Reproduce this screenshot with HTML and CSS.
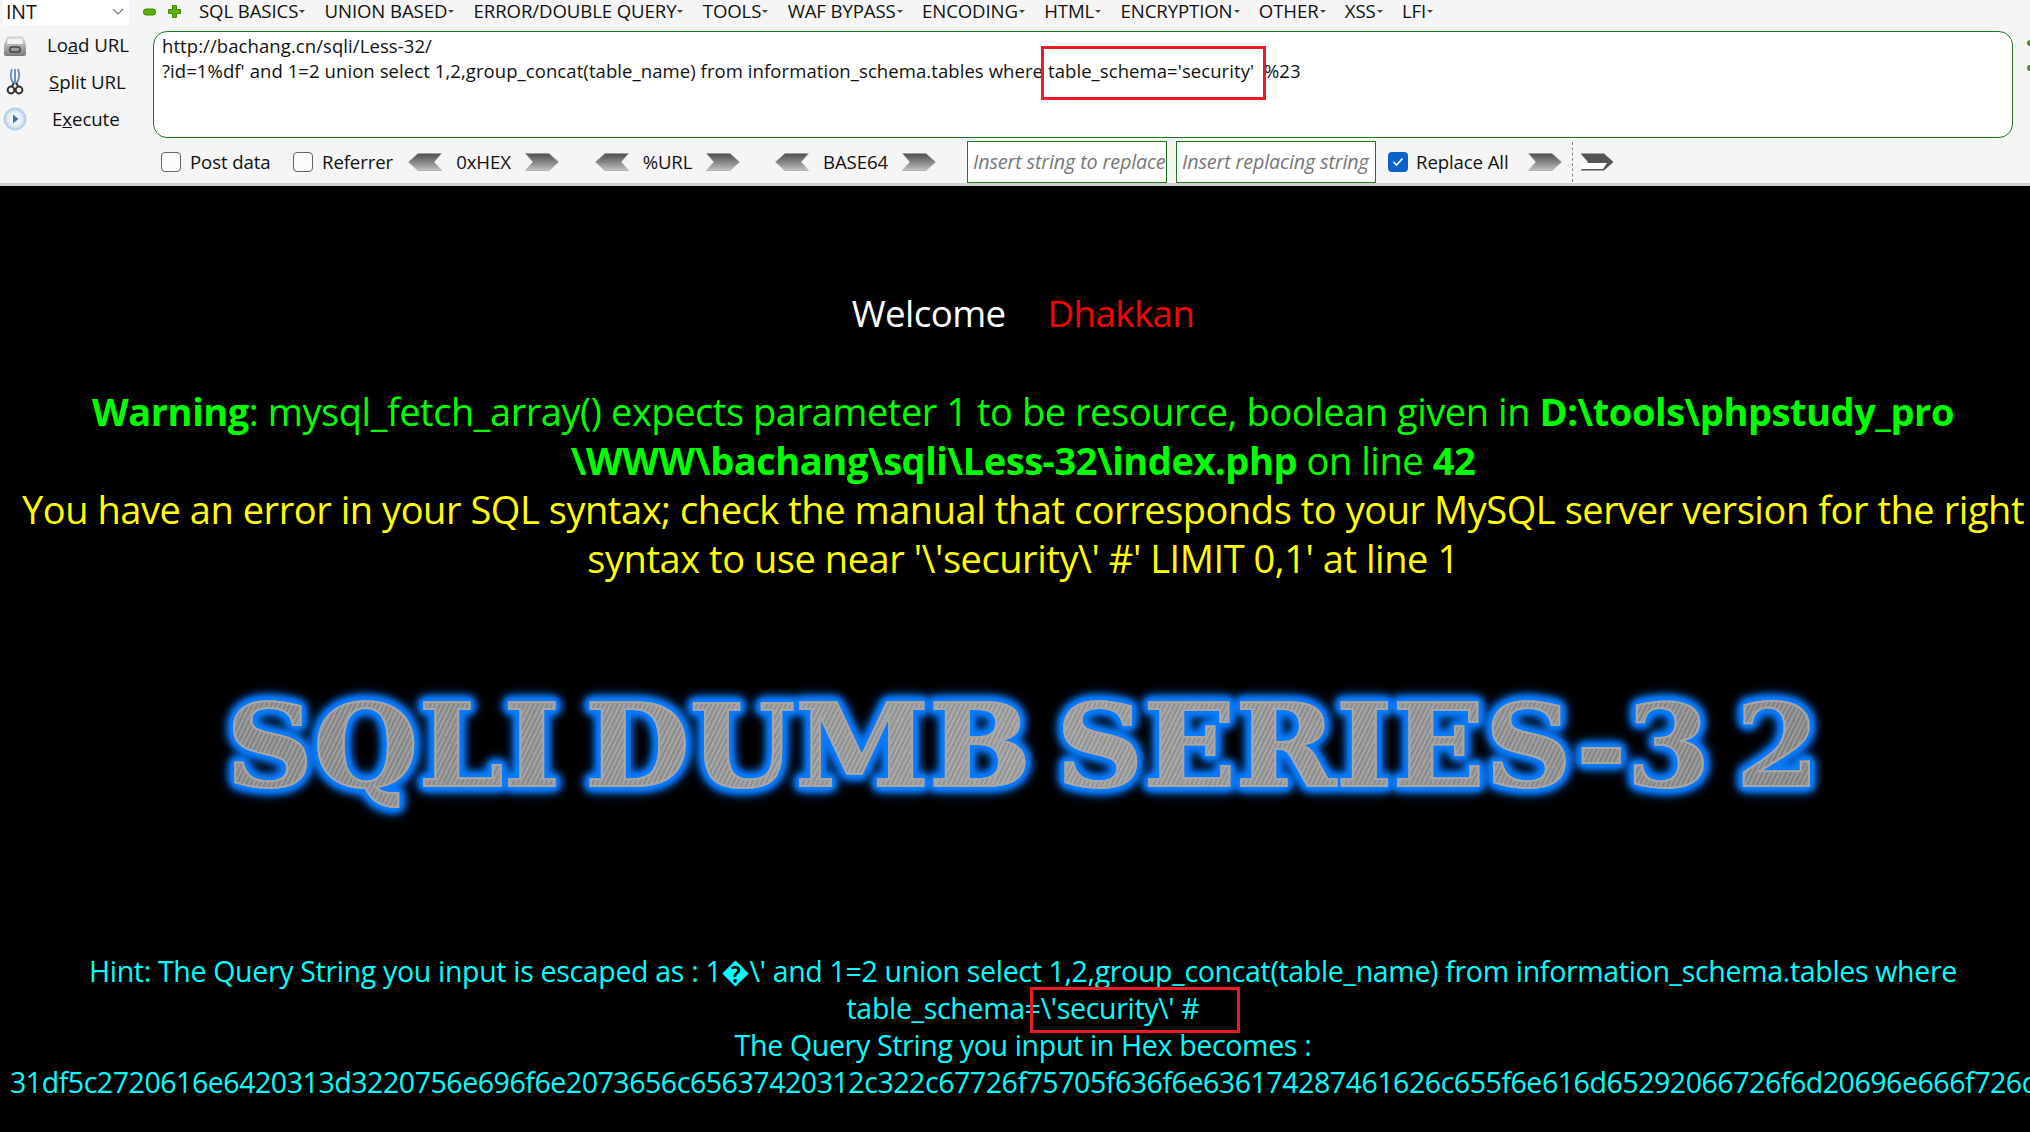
FILE: index.html
```html
<!DOCTYPE html>
<html>
<head>
    <title>Less-32</title>
    <meta http-equiv="Content-Type" content="text/html; charset=utf-8"/>
    <link rel="stylesheet" href="styles.css">
</head>
<body>
<svg class="defs" width="0" height="0">
    <defs>
        <linearGradient id="arrowFill" x1="0" y1="0" x2="0" y2="1">
            <stop offset="0" stop-color="#4f4f4f"/>
            <stop offset="0.55" stop-color="#8a8a8a"/>
            <stop offset="1" stop-color="#c4c4c4"/>
        </linearGradient>
        <linearGradient id="driveFill" x1="0" y1="0" x2="0" y2="1">
            <stop offset="0" stop-color="#e2e2e2"/>
            <stop offset="1" stop-color="#7b7b7b"/>
        </linearGradient>
        <radialGradient id="playFill">
            <stop offset="0" stop-color="#ffffff"/>
            <stop offset="0.7" stop-color="#dfeaf7"/>
            <stop offset="1" stop-color="#a9c6e6"/>
        </radialGradient>
        <symbol id="arrowRight" viewBox="0 0 34 18">
            <path d="M0.5 0.5H24L33.5 9L24 17.5H0.5L8 9Z" fill="url(#arrowFill)" stroke="#9a9a9a" stroke-width="0.6"/>
        </symbol>
        <symbol id="arrowLeft" viewBox="0 0 34 18">
            <path d="M33.5 0.5H10L0.5 9L10 17.5H33.5L26 9Z" fill="url(#arrowFill)" stroke="#9a9a9a" stroke-width="0.6"/>
        </symbol>
    </defs>
</svg>

<div id="hackbar">
    <div class="menu-row">
        <div class="select-box">
            <span>INT</span>
            <svg class="select-chevron" width="12" height="7" viewBox="0 0 12 7"><path d="M1 1L6 6L11 1" fill="none" stroke="#777" stroke-width="1.2"/></svg>
        </div>
        <svg class="pm-icon" width="13" height="8" viewBox="0 0 13 8"><rect x="0.5" y="1" width="12" height="6" rx="2.5" fill="#5fae0a" stroke="#3f8a06"/></svg>
        <svg class="pm-icon plus" width="13" height="13" viewBox="0 0 13 13"><path d="M4.5 0.5h4v4h4v4h-4v4h-4v-4h-4v-4h4z" fill="#5fae0a" stroke="#3f8a06" stroke-linejoin="round"/></svg>
        <ul class="menu">
            <li>SQL BASICS</li>
            <li>UNION BASED</li>
            <li>ERROR/DOUBLE QUERY</li>
            <li>TOOLS</li>
            <li>WAF BYPASS</li>
            <li>ENCODING</li>
            <li>HTML</li>
            <li>ENCRYPTION</li>
            <li>OTHER</li>
            <li>XSS</li>
            <li>LFI</li>
        </ul>
    </div>

    <div class="url-row">
        <div class="side-buttons">
            <div class="side-button">
                <svg width="24" height="24" viewBox="0 0 24 24">
                    <path d="M4 3H20L23 12V21a2 2 0 0 1-2 2H3a2 2 0 0 1-2-2V12Z" fill="url(#driveFill)"/>
                    <path d="M5 6H19L20 11H4Z" fill="#f4f4f4"/>
                    <rect x="7" y="14" width="10" height="5" rx="2" fill="none" stroke="#444" stroke-width="1.6"/>
                </svg>
                <span class="side-label load">Lo<u>a</u>d URL</span>
            </div>
            <div class="side-button">
                <svg width="24" height="28" viewBox="0 0 24 28">
                    <path d="M9 1C7 6 8 12 11 16M15 1C17 6 16 12 13 16M12 1V15" fill="none" stroke="#6f93b8" stroke-width="2"/>
                    <circle cx="8" cy="22" r="3.4" fill="none" stroke="#333" stroke-width="2"/>
                    <circle cx="16" cy="22" r="3.4" fill="none" stroke="#333" stroke-width="2"/>
                    <path d="M9 18L11 15M15 18L13 15" stroke="#333" stroke-width="2"/>
                </svg>
                <span class="side-label split"><u>S</u>plit URL</span>
            </div>
            <div class="side-button">
                <svg width="24" height="24" viewBox="0 0 24 24">
                    <circle cx="12" cy="12" r="11" fill="url(#playFill)" stroke="#b5cde8"/>
                    <path d="M10 7.5L15.5 12L10 16.5Z" fill="#3f72ad"/>
                </svg>
                <span class="side-label execute">E<u>x</u>ecute</span>
            </div>
        </div>
        <div class="url-box">http://bachang.cn/sqli/Less-32/<br>?id=1%df' and 1=2 union select 1,2,group_concat(table_name) from information_schema.tables where table_schema='security'&nbsp; %23</div>
        <div class="url-dots"><i></i><i></i></div>
    </div>

    <div class="tool-row">
        <label class="check"><span class="box"></span>Post data</label>
        <label class="check referrer"><span class="box"></span>Referrer</label>
        <div class="codec hex">
            <svg width="34" height="18"><use href="#arrowLeft"/></svg><span>0xHEX</span><svg width="34" height="18"><use href="#arrowRight"/></svg>
        </div>
        <div class="codec url">
            <svg width="34" height="18"><use href="#arrowLeft"/></svg><span>%URL</span><svg width="34" height="18"><use href="#arrowRight"/></svg>
        </div>
        <div class="codec b64">
            <svg width="34" height="18"><use href="#arrowLeft"/></svg><span>BASE64</span><svg width="34" height="18"><use href="#arrowRight"/></svg>
        </div>
        <input class="replace-input first" placeholder="Insert string to replace">
        <input class="replace-input" placeholder="Insert replacing string">
        <label class="check replace-all"><span class="box checked"><svg width="12" height="10" viewBox="0 0 12 10"><path d="M1.5 5L4.5 8L10.5 1.5" fill="none" stroke="#fff" stroke-width="1.6"/></svg></span>Replace All</label>
        <svg class="run-arrow" width="34" height="18"><use href="#arrowRight"/></svg>
        <span class="tool-sep"></span>
        <svg class="run-white" width="34" height="18" viewBox="0 0 34 18">
            <path d="M0.5 0.5H24L33.5 9L24 17.5H0.5L8 9Z" fill="#555"/>
            <path d="M5 10H27L23 16H1Z" fill="#fff"/>
        </svg>
    </div>
</div>

<div id="page">
    <div class="welcome">Welcome<span class="dhakkan">Dhakkan</span></div>

    <div class="errors">
        <div class="warning"><b>Warning</b>: mysql_fetch_array() expects parameter 1 to be resource, boolean given in <b>D:\tools\phpstudy_pro<br>\WWW\bachang\sqli\Less-32\index.php</b> on line <b>42</b></div>
        <div class="sql-error">You have an error in your SQL syntax; check the manual that corresponds to your MySQL server version for the right<br>syntax to use near '\'security\' #' LIMIT 0,1' at line 1</div>
    </div>

    <div class="title-wrap"><div class="title">SQLI DUMB SERIES-3 2</div></div>

    <div class="hint">
        Hint: The Query String you input is escaped as : 1�\' and 1=2 union select 1,2,group_concat(table_name) from information_schema.tables where<br>
        table_schema=\'security\' #<br>
        The Query String you input in Hex becomes :
        <div class="hex-line">31df5c2720616e6420313d3220756e696f6e2073656c65637420312c322c67726f75705f636f6e636174287461626c655f6e616d65292066726f6d20696e666f726d6174696f6e5f736368656d612e7461626c6573207768657265</div>
    </div>
</div>

<!-- red boxes drawn on top of the screenshot -->
<div class="mark mark-url"></div>
<div class="mark mark-hint"></div>
</body>
</html>
```

FILE: styles.css
```css
html, body {
    margin: 0;
    padding: 0;
    background-color: #000;
    overflow: hidden;
}

body {
    width: 2030px;
    height: 1132px;
    position: relative;
    font-family: "Open Sans", "DejaVu Sans", sans-serif;
}

.defs {
    display: block;
    position: absolute;
}

#hackbar {
    height: 183px;
    background-color: #f5f5f5;
    border-bottom: 3px solid #cfcfcf;
    color: #111;
    font-size: 18.6px;
    letter-spacing: -0.1px;
}

.menu-row {
    height: 31px;
    display: flex;
    align-items: flex-start;
}

.select-box {
    width: 120px;
    height: 23px;
    padding: 0 3px 2px;
    margin-left: 3px;
    background-color: #fff;
    display: flex;
    align-items: center;
    justify-content: space-between;
    font-size: 19.5px;
    line-height: 22px;
}

.select-chevron {
    margin-right: 2px;
}

.pm-icon {
    margin: 8px 0 0 14px;
}

.pm-icon.plus {
    margin: 5px 0 0 12px;
}

.menu {
    display: flex;
    list-style: none;
    margin: 0 0 0 18px;
    padding: 0;
    line-height: 22px;
}

.menu li {
    display: flex;
    align-items: center;
    margin-right: 19.3px;
}

.menu li::after {
    content: "";
    margin-left: 1px;
    border-top: 3px solid #444;
    border-left: 3px solid transparent;
    border-right: 3px solid transparent;
}

.url-row {
    height: 107px;
    display: flex;
    align-items: stretch;
}

.side-buttons {
    width: 153px;
    margin-top: -5px;
    flex-shrink: 0;
    display: flex;
    flex-direction: column;
}

.side-button {
    height: 37px;
    display: flex;
    align-items: center;
    padding-left: 3px;
}

.side-label {
    font-size: 18.7px;
    white-space: nowrap;
    margin-left: 20px;
}

.side-label.split {
    margin-left: 22px;
}

.side-label.execute {
    margin-left: 25px;
}

.url-box {
    width: 1860px;
    height: 107px;
    box-sizing: border-box;
    background-color: #fff;
    border: 1px solid #1d7a1d;
    border-radius: 14px;
    padding: 2px 8px;
    font-size: 18.5px;
    letter-spacing: 0.08px;
    line-height: 24.5px;
    white-space: nowrap;
}

.url-dots {
    width: 17px;
    padding: 9px 0 0 14px;
    box-sizing: border-box;
    overflow: hidden;
}

.url-dots i {
    display: block;
    width: 6px;
    height: 6px;
    margin-bottom: 19px;
    border-radius: 50%;
    background-color: #4d9a12;
}

.tool-row {
    height: 45px;
    padding-top: 1px;
    padding-left: 161px;
    display: flex;
    align-items: center;
}

.check {
    display: flex;
    align-items: center;
    white-space: nowrap;
}

.box {
    width: 18px;
    height: 18px;
    margin-right: 9px;
    border: 1px solid #666;
    border-radius: 4px;
    background-color: #fbfbfb;
    flex-shrink: 0;
}

.box.checked {
    width: 20px;
    height: 20px;
    margin-right: 8px;
    border: 0;
    background-color: #0a63c9;
    display: flex;
    align-items: center;
    justify-content: center;
}

.check.referrer {
    width: 115px;
}

.check:first-child {
    width: 132px;
}

.codec {
    display: flex;
    align-items: center;
    justify-content: space-between;
    width: 151px;
}

.codec.hex {
    margin-right: 36px;
}

.codec.url {
    width: 145px;
    margin-right: 35px;
}

.codec.b64 {
    width: 161px;
    margin-right: 31px;
}

.replace-input {
    width: 200px;
    height: 42px;
    box-sizing: border-box;
    margin: 0 9px 0 0;
    padding: 0 0 0 5px;
    border: 1px solid #1d7a1d;
    background-color: #fff;
    font-family: inherit;
    font-size: 19.8px;
    font-style: italic;
    letter-spacing: -0.15px;
}

.replace-input::placeholder {
    color: #777;
    opacity: 1;
}

.replace-all {
    margin-left: 3px;
    width: 140px;
}

.tool-sep {
    height: 40px;
    margin: 0 7px 0 10px;
    border-left: 1px dashed #888;
}

/* page text is centred on a box a bit wider than the window */
#page {
    width: 2046px;
    color: #fff;
    text-align: center;
    white-space: nowrap;
}

.welcome {
    padding-top: 102px;
    font-size: 36.7px;
    line-height: 50px;
    letter-spacing: -0.6px;
}

.dhakkan {
    margin-left: 42px;
    color: #f00;
}

.errors {
    margin-top: 49px;
    font-size: 38px;
    line-height: 49px;
    letter-spacing: -0.45px;
}

.warning {
    color: #0f0;
}

.sql-error {
    color: #ff0;
}

.title-wrap {
    margin-top: 98px;
    height: 130px;
}

.title {
    display: inline-block;
    padding: 10px 20px;
    font-family: "DejaVu Serif", serif;
    font-weight: bold;
    font-size: 114px;
    line-height: 110px;
    word-spacing: -16px;
    color: transparent;
    -webkit-text-stroke: 2px #a6a6a6;
    transform: scaleX(1.06);
    background-image:
        repeating-linear-gradient(115deg, rgba(255, 255, 255, 0.1) 0, rgba(255, 255, 255, 0.1) 2px, rgba(0, 0, 0, 0.08) 2px, rgba(0, 0, 0, 0.08) 4px),
        linear-gradient(90deg, #8f8f8f, #a3a3a3 50%, #8c8c8c);
    -webkit-background-clip: text;
    background-clip: text;
    filter: drop-shadow(0 0 2px #0a7cff) drop-shadow(0 0 2px #0a7cff) drop-shadow(0 0 3px #0a7cff) drop-shadow(0 0 3px #0a7cff) drop-shadow(0 0 4px #0a70e8);
}

.hint {
    margin-top: 142px;
    color: #0ff;
    font-size: 28.5px;
    line-height: 37px;
    letter-spacing: -0.32px;
}

.hex-line {
    text-align: left;
    padding-left: 10px;
    letter-spacing: -0.45px;
}

.mark {
    position: absolute;
    box-sizing: border-box;
    border: 3px solid #ed1c24;
}

.mark-url {
    left: 1041px;
    top: 46px;
    width: 225px;
    height: 54px;
}

.mark-hint {
    left: 1030px;
    top: 987px;
    width: 210px;
    height: 46px;
}
```
